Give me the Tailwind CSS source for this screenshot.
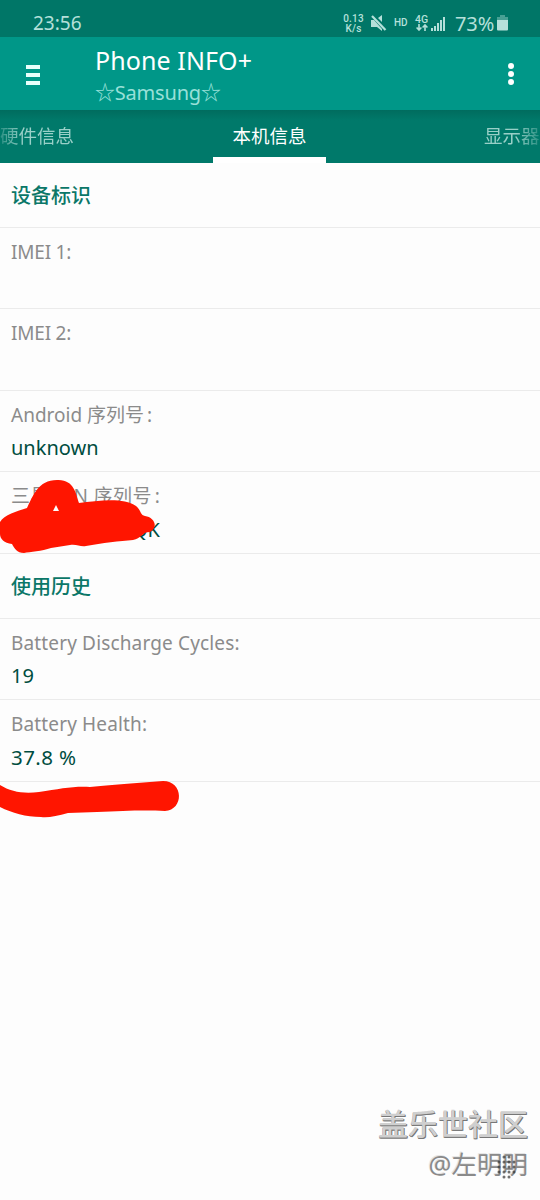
<!DOCTYPE html>
<html lang="zh-CN">
<head>
    <meta charset="UTF-8">
    <meta name="viewport" content="width=device-width, initial-scale=1.0">
    <title>Phone INFO+</title>
    <script src="https://cdn.jsdelivr.net/npm/@tailwindcss/browser@4"></script>
</head>
<body class="bg-[#fdfdfd] font-['Noto_Sans','Noto_Sans_CJK_SC',sans-serif]">
<div class="relative w-[540px] h-[1200px] overflow-hidden">
    <!-- Status bar -->
    <div class="flex items-center h-[37px] pt-[10px] pl-[33px] pr-[32px] bg-[#007667] text-[#b5e0da]">
        <span class="text-[19px] leading-none">23:56</span>
        <div class="ml-auto flex items-center">
            <div class="flex flex-col items-center w-[21px] mr-[7px] font-['Roboto'] text-[10px] leading-[10px] font-medium tracking-[0.2px]">
                <span>0.13</span>
                <span>K/s</span>
            </div>
            <svg class="w-4 h-4 mr-[7px] -mt-[2px]" viewBox="0 0 16 16" fill="currentColor">
                <path d="M0 5h3l8 9v2l-5-4H0zM7 3l4-3v7z"/>
                <path d="M1 1l13.500 14" stroke="currentColor" stroke-width="2.200"/>
            </svg>
            <span class="w-[14px] mr-[7px] -mt-[2px] font-['Roboto'] text-[10px] leading-none font-medium">HD</span>
            <div class="flex flex-col items-center w-[13px] mr-[3px] -mt-[1px]">
                <span class="font-['Roboto'] text-[10.5px] leading-[9px] font-medium">4G</span>
                <svg class="w-3 h-[7px]" viewBox="0 0 12 7" fill="none" stroke="currentColor" stroke-width="1.6">
                    <path d="M3 0v6M.6 3.500L3 6l2.400-2.500M9 7V1M6.600 3.500L9 1l2.400 2.500"/>
                </svg>
            </div>
            <svg class="w-[15px] h-[15px] mr-[9px]" viewBox="0 0 15 15" fill="currentColor">
                <path d="M0 12h2v3H0zM3 10h2v5H3zM6 7h2v8H6zM9 4h2v11H9zM12 1h2v14h-2z"/>
            </svg>
            <span class="text-[20px] leading-none w-[42px] tracking-[-0.1px]">73%</span>
            <svg class="w-[11px] h-4 -mt-[1px]" viewBox="0 0 11 16" fill="currentColor">
                <path d="M3 0h5v2h3v3H0V2h3z" opacity=".4"/>
                <path d="M0 5h11v9.500a1 1 0 0 1-1 1H1a1 1 0 0 1-1-1z"/>
            </svg>
        </div>
    </div>

    <!-- App bar -->
    <div class="flex items-center h-[73px] pl-[26px] pr-[26px] bg-[#009788] text-white">
        <div class="flex flex-col gap-1 w-[14px] mt-[2px]">
            <div class="h-1 bg-[#e8fffb]"></div>
            <div class="h-1 bg-[#e8fffb]"></div>
            <div class="h-1 bg-[#e8fffb]"></div>
        </div>
        <div class="ml-[55px] self-start pt-[7px] whitespace-nowrap">
            <h1 class="text-[25px] leading-8 tracking-[0.1px]">Phone INFO+</h1>
            <p class="text-[20px] leading-[34px] tracking-[-0.2px] text-[#99e0d8]">☆Samsung☆</p>
        </div>
        <div class="ml-auto flex flex-col gap-[2px]">
            <div class="size-[6px] rounded-full bg-white"></div>
            <div class="size-[6px] rounded-full bg-white"></div>
            <div class="size-[6px] rounded-full bg-white"></div>
        </div>
    </div>

    <!-- Tabs -->
    <div class="flex justify-between h-[53px] bg-linear-to-b from-[#006c5e] to-[#00796a] to-20% text-[18.5px] leading-[52px] text-[#99d0c8] whitespace-nowrap">
        <div class="w-[213px] mask-l-from-[190px] mask-l-to-[222px]">硬件信息</div>
        <div class="w-[113px] text-center text-white border-b-[6px] border-white">本机信息</div>
        <div class="w-[214px] pl-[158px] overflow-hidden mask-r-from-[190px] mask-r-to-[222px]">显示器</div>
    </div>

    <!-- Device info list -->
    <h2 class="h-[65px] pl-[11px] border-b border-[#ebebeb] text-[20px] leading-[66px] font-medium text-[#0b7768]">设备标识</h2>
    <div class="h-[81px] pt-[9px] pl-[11px] border-b border-[#ebebeb]">
        <div class="text-[19px] leading-[30px] tracking-[-0.2px] text-[#8b8b8b]">IMEI 1:</div>
    </div>
    <div class="h-[82px] pt-[9px] pl-[11px] border-b border-[#ebebeb]">
        <div class="text-[19px] leading-[30px] tracking-[-0.2px] text-[#8b8b8b]">IMEI 2:</div>
    </div>
    <div class="h-[81px] pt-[9px] pl-[11px] border-b border-[#ebebeb]">
        <div class="text-[19px] leading-[30px] text-[#8b8b8b]">Android 序列号<span class="ml-[3px]">:</span></div>
        <div class="text-[20px] leading-9 text-[#004d40]">unknown</div>
    </div>
    <div class="relative h-[82px] pt-[9px] pl-[11px] border-b border-[#ebebeb]">
        <div class="text-[19px] leading-[30px] tracking-[0.4px] text-[#8b8b8b]">三星 S/N 序列号<span class="ml-[3px]">:</span></div>
        <div class="w-[149px] text-right text-[20px] leading-[37px] text-[#004d40]">QK</div>
        <!-- scribble over the serial number -->
        <svg class="absolute left-0 -top-[7px] w-[200px] h-[100px]" viewBox="0 0 200 100" fill="#ff1500">
            <path fill-rule="evenodd" d="M0 57C4 50 17 46 27 43C33 31 38 15 57 15C74 14 76 29 79 38C98 36 123 32 136 41C141 45 140 50 145 51C154 52 159 62 150 67C142 67 141 74 133 75C120 76 102 78 86 81C80 82 77 79 70 80L51 83C42 86 30 87 24 88C17 88 14 83 12 79C4 78 0 74 0 69ZM56 40L53 46H59Z"/>
        </svg>
    </div>

    <h2 class="h-[65px] pl-[11px] border-b border-[#ebebeb] text-[20px] leading-[66px] font-medium text-[#0b7768]">使用历史</h2>
    <div class="h-[81px] pt-[9px] pl-[11px] border-b border-[#ebebeb]">
        <div class="text-[19px] leading-[30px] tracking-[0.15px] text-[#8b8b8b]">Battery Discharge Cycles:</div>
        <div class="text-[20px] leading-9 text-[#004d40]">19</div>
    </div>
    <div class="relative h-[82px] pt-[9px] pl-[11px] border-b border-[#ebebeb]">
        <div class="text-[19px] leading-[30px] tracking-[0.15px] text-[#8b8b8b]">Battery Health:</div>
        <div class="text-[20.5px] leading-[37px] tracking-[0.4px] text-[#004d40]">37.8 %</div>
        <!-- underline stroke -->
        <svg class="absolute left-0 top-[80px] w-[200px] h-[40px]" viewBox="0 0 200 40" fill="#ff1500">
            <path d="M0 5C11 12 24 14 39 12C60 9 73 6 90 7C110 5 137 3 163 1C184 1 184 30 165 31C143 30 123 31 97 32L68 33C57 36 48 38 41 37C26 37 12 33 0 27Z"/>
        </svg>
    </div>

    <!-- Community watermark -->
    <div class="absolute right-[12px] top-[1104px] text-right whitespace-nowrap">
        <div class="text-[30px] leading-10 font-medium text-[#cfcfcf] [text-shadow:1px_1px_0_#777,0_1px_0_#777]">盖乐世社区</div>
        <div class="text-[25.5px] leading-[40px] text-[#8a8a8a] [text-shadow:-1px_-1px_0_#e4e4e4]">@左明明</div>
        <svg class="absolute right-[12px] top-[49px] w-[20px] h-[28px]" viewBox="0 0 20 28" fill="none" stroke="#333" stroke-width="3" stroke-linecap="round" stroke-dasharray="0 5">
            <path d="M3 9v12M8 4v22M13 4v22M18 9v12" opacity=".7"/>
        </svg>
    </div>
</div>
</body>
</html>
